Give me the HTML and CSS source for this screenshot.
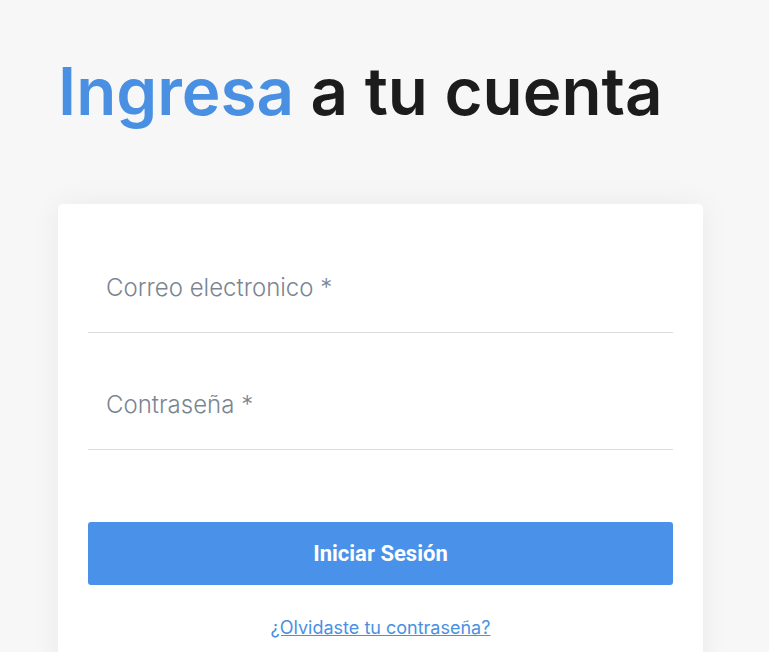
FILE: index.html
```html
<!DOCTYPE html>
<html lang="es">
<head>
    <meta charset="UTF-8">
    <meta name="viewport" content="width=device-width, initial-scale=1.0">
    <title>Ingresa a tu cuenta</title>
    <link rel="stylesheet" href="styles.css">
</head>
<body>
    <div class="container">
        <h1 class="title"><span class="highlight">Ingresa</span> a tu cuenta</h1>
        <form class="login-card">
            <input class="field" type="email" placeholder="Correo electronico *">
            <input class="field" type="password" placeholder="Contraseña *">
            <button type="button" class="login-button">Iniciar Sesión</button>
            <a href="#" class="forgot-link">¿Olvidaste tu contraseña?</a>
        </form>
    </div>
</body>
</html>
```

FILE: styles.css
```css
body {
    margin: 0;
    background-color: #f7f7f7;
    font-family: 'Inter', sans-serif;
    color: #1c1c1c;
    overflow: hidden;
}

.container {
    padding: 0 66px 0 58px;
}

.title {
    margin: 52px 0 0 0;
    font-size: 65.5px;
    font-weight: 600;
    line-height: 80px;
}

.highlight {
    color: #4a90e2;
}

.login-card {
    margin-top: 72px;
    background: #fff;
    border-radius: 5px;
    box-shadow: 0 0 30px rgba(0, 0, 0, 0.06);
    padding: 45px 30px 40px 30px;
    display: flex;
    flex-direction: column;
}

.field {
    display: block;
    border: none;
    border-bottom: 1px solid #dcdcdc;
    padding: 25px 18px 30px;
    font-family: 'Inter', sans-serif;
    font-size: 24px;
    font-weight: 300;
    line-height: 28px;
    outline: none;
    background: transparent;
}

.field + .field {
    margin-top: 33px;
}

.field::placeholder {
    color: #7b8591;
}

.login-button {
    margin-top: 72px;
    height: 63px;
    border: none;
    border-radius: 3px;
    background: #4a92e9;
    color: #fff;
    font-family: 'Roboto', sans-serif;
    font-weight: 700;
    font-size: 22px;
    cursor: pointer;
}

.forgot-link {
    margin-top: 32px;
    align-self: center;
    color: #4a90e2;
    font-size: 18px;
    line-height: 22px;
}
```
